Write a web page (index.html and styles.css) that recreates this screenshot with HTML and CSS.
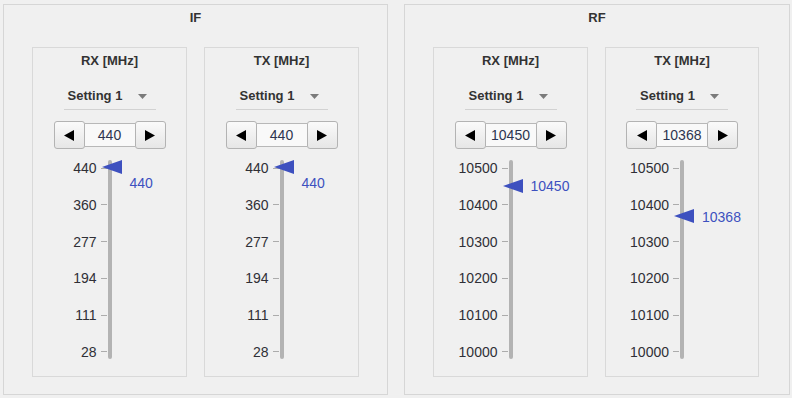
FILE: index.html
```html
<!DOCTYPE html>
<html>
<head>
<meta charset="utf-8">
<link rel="stylesheet" href="styles.css">
</head>
<body>
<div class="main">
  <section class="panel">
    <div class="panel-title">IF</div>
    <div class="row">
      <div class="box">
        <div class="box-title">RX [MHz]</div>
        <div class="dropdown"><span>Setting 1</span><svg class="caret" width="9" height="5" viewBox="0 0 9 5"><polygon points="0,0 9,0 4.5,5"/></svg></div>
        <div class="spinner">
          <button class="spin-btn"><svg width="10" height="11" viewBox="0 0 10 11"><polygon points="10,0 10,11 0,5.5"/></svg></button>
          <div class="spin-value">440</div>
          <button class="spin-btn"><svg width="10" height="11" viewBox="0 0 10 11"><polygon points="0,0 0,11 10,5.5"/></svg></button>
        </div>
        <div class="slider">
          <div class="scale"><div class="tick"><span>440</span><i></i></div><div class="tick"><span>360</span><i></i></div><div class="tick"><span>277</span><i></i></div><div class="tick"><span>194</span><i></i></div><div class="tick"><span>111</span><i></i></div><div class="tick"><span>28</span><i></i></div></div>
          <div class="track"><div class="thumb" style="top:0px"></div><div class="value" style="top:15px">440</div></div>
        </div>
      </div>
      <div class="box">
        <div class="box-title">TX [MHz]</div>
        <div class="dropdown"><span>Setting 1</span><svg class="caret" width="9" height="5" viewBox="0 0 9 5"><polygon points="0,0 9,0 4.5,5"/></svg></div>
        <div class="spinner">
          <button class="spin-btn"><svg width="10" height="11" viewBox="0 0 10 11"><polygon points="10,0 10,11 0,5.5"/></svg></button>
          <div class="spin-value">440</div>
          <button class="spin-btn"><svg width="10" height="11" viewBox="0 0 10 11"><polygon points="0,0 0,11 10,5.5"/></svg></button>
        </div>
        <div class="slider">
          <div class="scale"><div class="tick"><span>440</span><i></i></div><div class="tick"><span>360</span><i></i></div><div class="tick"><span>277</span><i></i></div><div class="tick"><span>194</span><i></i></div><div class="tick"><span>111</span><i></i></div><div class="tick"><span>28</span><i></i></div></div>
          <div class="track"><div class="thumb" style="top:0px"></div><div class="value" style="top:15px">440</div></div>
        </div>
      </div>
    </div>
  </section>
  <section class="panel panel-rf">
    <div class="panel-title">RF</div>
    <div class="row">
      <div class="box">
        <div class="box-title">RX [MHz]</div>
        <div class="dropdown"><span>Setting 1</span><svg class="caret" width="9" height="5" viewBox="0 0 9 5"><polygon points="0,0 9,0 4.5,5"/></svg></div>
        <div class="spinner">
          <button class="spin-btn"><svg width="10" height="11" viewBox="0 0 10 11"><polygon points="10,0 10,11 0,5.5"/></svg></button>
          <div class="spin-value">10450</div>
          <button class="spin-btn"><svg width="10" height="11" viewBox="0 0 10 11"><polygon points="0,0 0,11 10,5.5"/></svg></button>
        </div>
        <div class="slider">
          <div class="scale"><div class="tick"><span>10500</span><i></i></div><div class="tick"><span>10400</span><i></i></div><div class="tick"><span>10300</span><i></i></div><div class="tick"><span>10200</span><i></i></div><div class="tick"><span>10100</span><i></i></div><div class="tick"><span>10000</span><i></i></div></div>
          <div class="track"><div class="thumb" style="top:19px"></div><div class="value" style="top:18px">10450</div></div>
        </div>
      </div>
      <div class="box">
        <div class="box-title">TX [MHz]</div>
        <div class="dropdown"><span>Setting 1</span><svg class="caret" width="9" height="5" viewBox="0 0 9 5"><polygon points="0,0 9,0 4.5,5"/></svg></div>
        <div class="spinner">
          <button class="spin-btn"><svg width="10" height="11" viewBox="0 0 10 11"><polygon points="10,0 10,11 0,5.5"/></svg></button>
          <div class="spin-value">10368</div>
          <button class="spin-btn"><svg width="10" height="11" viewBox="0 0 10 11"><polygon points="0,0 0,11 10,5.5"/></svg></button>
        </div>
        <div class="slider">
          <div class="scale"><div class="tick"><span>10500</span><i></i></div><div class="tick"><span>10400</span><i></i></div><div class="tick"><span>10300</span><i></i></div><div class="tick"><span>10200</span><i></i></div><div class="tick"><span>10100</span><i></i></div><div class="tick"><span>10000</span><i></i></div></div>
          <div class="track"><div class="thumb" style="top:49px"></div><div class="value" style="top:49px">10368</div></div>
        </div>
      </div>
    </div>
  </section>
</div>
</body>
</html>
```

FILE: styles.css
```css
html, body {
  margin: 0;
  background: #f0f0f0;
  font-family: "Liberation Sans", Arial, sans-serif;
  color: #333;
}
.main {
  display: flex;
  gap: 16px;
  padding: 4px 0 0 3px;
}
.panel {
  box-sizing: border-box;
  width: 385px;
  height: 391px;
  border: 1px solid #d6d6d6;
  display: flex;
  flex-direction: column;
  align-items: center;
}
.panel-rf {
  width: 386px;
}
.panel-title {
  font-size: 13px;
  font-weight: bold;
  line-height: 16px;
  padding-top: 5px;
}
.row {
  align-self: stretch;
  display: flex;
  gap: 17px;
  margin-top: 21px;
  padding-left: 28px;
}
.box {
  box-sizing: border-box;
  width: 155px;
  height: 330px;
  border: 1px solid #d9d9d9;
  display: flex;
  flex-direction: column;
  align-items: center;
}
.panel-rf .box + .box {
  width: 154px;
}
.box-title {
  font-size: 13px;
  font-weight: bold;
  line-height: 16px;
  padding-top: 5px;
}
.dropdown {
  box-sizing: border-box;
  width: 92px;
  margin-top: 19px;
  padding: 0 9px 5px 4px;
  border-bottom: 1px solid #d2d2d2;
  display: flex;
  align-items: center;
  justify-content: space-between;
  font-size: 13px;
  font-weight: bold;
  line-height: 16px;
}
.caret {
  fill: #7b7b7b;
  display: block;
}
.spinner {
  display: flex;
  align-items: center;
  margin-top: 11px;
  height: 28px;
}
.spin-btn {
  box-sizing: border-box;
  width: 31px;
  height: 28px;
  padding: 0;
  margin: 0;
  border: 1px solid #b3b3b3;
  border-radius: 3px;
  background: linear-gradient(#fafafa, #e6e6e6);
  display: flex;
  align-items: center;
  justify-content: center;
}
.spin-btn svg {
  display: block;
  fill: #000;
}
.spin-value {
  box-sizing: border-box;
  width: 50px;
  height: 24px;
  border-top: 1px solid #b8b8b8;
  border-bottom: 1px solid #b8b8b8;
  background: #f9f9f9;
  font-size: 14px;
  line-height: 22px;
  text-align: center;
  color: #2d3550;
}
.slider {
  align-self: stretch;
  display: grid;
  grid-template-columns: 1fr 4px 1fr;
  margin-top: 11px;
}
.scale {
  height: 200px;
  display: flex;
  flex-direction: column;
  justify-content: space-between;
}
.tick {
  display: flex;
  align-items: center;
  justify-content: flex-end;
  gap: 4px;
  padding-right: 1px;
  font-size: 14px;
  line-height: 16px;
  color: #2f2f36;
}
.tick i {
  display: block;
  width: 6px;
  height: 1px;
  background: #acacac;
}
.track {
  position: relative;
  height: 199px;
  background: #b3b3b3;
  border-radius: 2px;
}
.thumb {
  position: absolute;
  left: -6px;
  width: 0;
  height: 0;
  border-top: 7.5px solid transparent;
  border-bottom: 7.5px solid transparent;
  border-right: 20px solid #3d50bf;
}
.value {
  position: absolute;
  left: 22px;
  font-size: 14px;
  line-height: 16px;
  color: #3d50bf;
  white-space: nowrap;
}
```
